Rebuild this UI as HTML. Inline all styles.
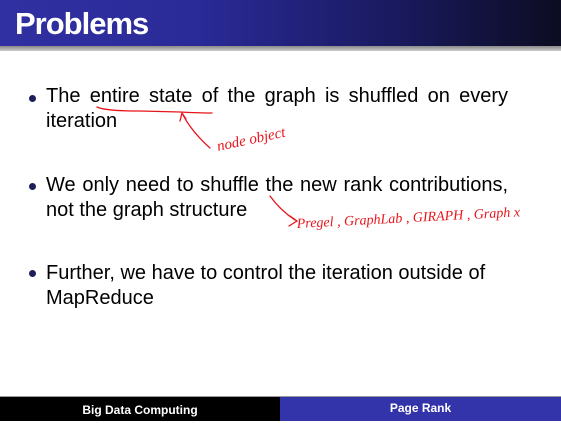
<!DOCTYPE html>
<html><head><meta charset="utf-8"><style>
html,body{margin:0;padding:0}
body{width:561px;height:421px;position:relative;background:#fff;overflow:hidden;font-family:"Liberation Sans",sans-serif}
.hdr{position:absolute;left:0;top:0;width:561px;height:46px;background:linear-gradient(90deg,#3030a2 0%,#2a2a98 35%,#1a1a60 70%,#0c0c22 100%)}
.shadow{position:absolute;left:0;top:46px;width:561px;height:5px;background:linear-gradient(#888,#ccc)}
.title{position:absolute;left:15px;top:6px;color:#fff;font-weight:bold;font-size:31px;letter-spacing:-1px}
.b{position:absolute;left:46px;width:462px;font-size:20px;color:#000;line-height:25px}
.b span{display:block}
.j{text-align:justify;text-align-last:justify}
.dot{position:absolute;left:29px;width:7px;height:7px;border-radius:50%;background:#1e1e5a}
.f1{position:absolute;left:0;top:397px;width:280px;height:24px;background:#000;color:#fff;font-weight:bold;font-size:12px;text-align:center;line-height:26px}
.f2{position:absolute;left:280px;top:397px;width:281px;height:24px;background:#3333aa;color:#fff;font-weight:bold;font-size:12px;text-align:center;line-height:22px}
.line{position:absolute;left:0;top:396px;width:561px;height:1px;background:#999}
</style></head><body>
<div class="hdr"></div><div class="shadow"></div>
<div class="title">Problems</div>
<div class="dot" style="top:95px"></div>
<div class="b" style="top:84px"><span class="j">The entire state of the graph is shuffled on every</span><span>iteration</span></div>
<div class="dot" style="top:183px"></div>
<div class="b" style="top:173px"><span class="j">We only need to shuffle the new rank contributions,</span><span>not the graph structure</span></div>
<div class="dot" style="top:270px"></div>
<div class="b" style="top:261px"><span>Further, we have to control the iteration outside of</span><span>MapReduce</span></div>
<svg style="position:absolute;left:0;top:0" width="561" height="421" fill="none" stroke="#e8141c" stroke-width="1.3" stroke-linecap="round">
<path d="M97 107 Q105 111 140 111 L180 112 Q200 113 212 113"/>
<path d="M180 121 L182 113 L186 119 M183 115 Q192 132 210 148"/>
<text x="218" y="151" fill="#e8141c" stroke="none" font-size="15" font-family="Liberation Serif,serif" font-style="italic" transform="rotate(-12 218 151)">node object</text>
<path d="M270 196 Q280 210 295 220 M290 216 L297 221 L289 226"/>
<text x="297" y="228" fill="#e8141c" stroke="none" font-size="14" font-family="Liberation Serif,serif" font-style="italic" transform="rotate(-3 297 228)">Pregel , GraphLab , GIRAPH , Graph x</text>
</svg>
<div class="line"></div>
<div class="f1">Big Data Computing</div>
<div class="f2">Page Rank</div>
</body></html>
